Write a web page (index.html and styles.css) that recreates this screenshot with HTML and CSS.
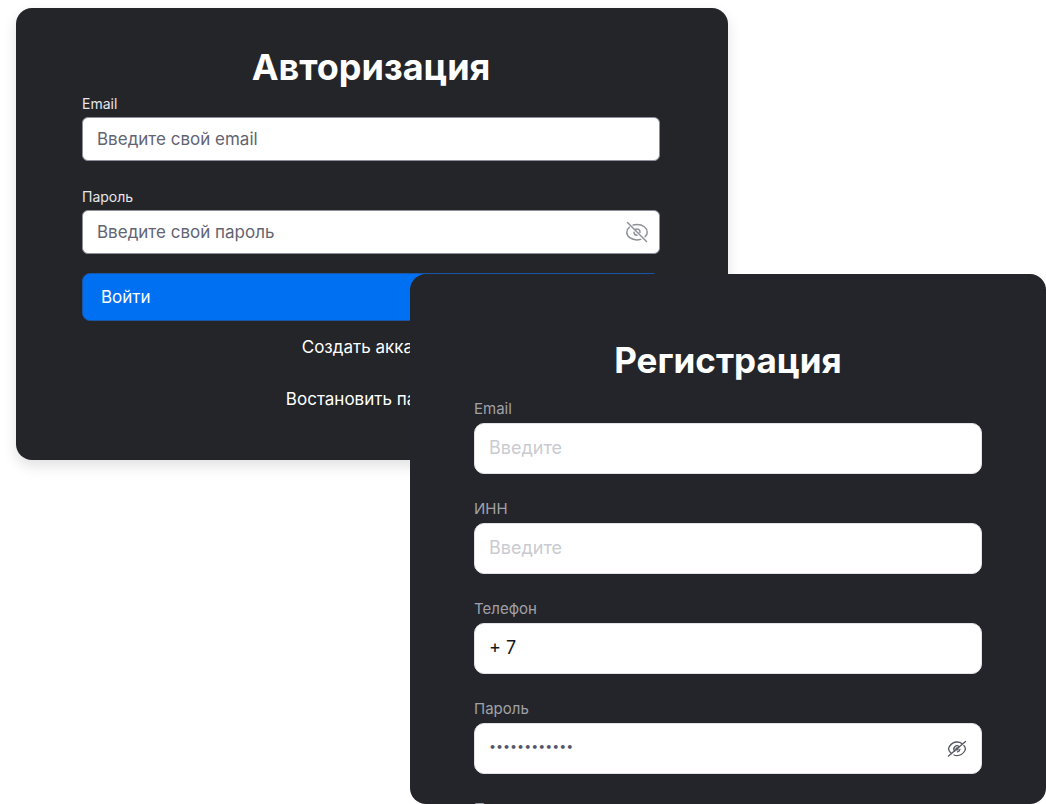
FILE: index.html
```html
<!DOCTYPE html>
<html lang="ru">
<head>
    <meta charset="UTF-8">
    <meta name="viewport" content="width=device-width, initial-scale=1.0">
    <title>Авторизация и регистрация</title>
    <link rel="stylesheet" href="styles.css">
</head>
<body>
    <main class="forms">
        <!-- Вход -->
        <form class="card login">
            <h1>Авторизация</h1>
            <div class="field">
                <label for="loginEmail">Email</label>
                <input type="email" id="loginEmail" placeholder="Введите свой email">
            </div>
            <div class="field">
                <label for="loginPassword">Пароль</label>
                <div class="password">
                    <input type="password" id="loginPassword" placeholder="Введите свой пароль">
                    <button type="button" class="toggle" aria-label="Показать пароль">
                        <svg width="24" height="24" viewBox="0 0 24 24" fill="none" stroke="currentColor" stroke-width="1.5" stroke-linecap="round">
                            <path d="M8.200 5C9.400 4.600 10.700 4.400 12 4.400c5.800 0 10.200 3.600 10.200 7.800 0 1.700-.8 3.300-2.100 4.600"/>
                            <path d="M4.300 7.300C2.700 8.700 1.800 10.400 1.800 12.200c0 4.200 4.400 7.700 10.200 7.700 1.300 0 2.600-.2 3.700-.5"/>
                            <path d="M10.200 9.500c2.300-1.500 5.200.3 4.800 3M9 12.300c0 1.600 1.300 2.900 3 2.900"/>
                            <path d="M2.500 2.500l19 19"/>
                        </svg>
                    </button>
                </div>
            </div>
            <button type="submit" class="submit">Войти</button>
            <a href="#register">Создать аккаунт</a>
            <a href="#restore">Востановить пароль</a>
        </form>

        <!-- Регистрация -->
        <form class="card register" id="register">
            <h1>Регистрация</h1>
            <div class="field">
                <label for="email">Email</label>
                <input type="email" id="email" placeholder="Введите">
            </div>
            <div class="field">
                <label for="inn">ИНН</label>
                <input type="text" id="inn" placeholder="Введите">
            </div>
            <div class="field">
                <label for="phone">Телефон</label>
                <input type="tel" id="phone" value="+ 7">
            </div>
            <div class="field">
                <label for="password">Пароль</label>
                <div class="password">
                    <input type="password" id="password" placeholder="••••••••••••">
                    <button type="button" class="toggle" aria-label="Показать пароль">
                        <svg width="20" height="20" viewBox="0 0 20 20" fill="none" stroke="currentColor" stroke-width="1.3" stroke-linecap="round">
                            <path d="M14.800 4.600C13.400 3.500 11.700 3 10 3 7 3 4.200 4.700 2.300 7.600c-.8 1.200-.8 3.200 0 4.400.6 1 1.400 1.900 2.300 2.600"/>
                            <path d="M7 16c1 .4 2 .6 3 .6 3 0 5.800-1.700 7.700-4.600.8-1.200.8-3.200 0-4.400l-.9-1.200"/>
                            <path d="M12.100 7.700a3 3 0 0 0-4.300 4.300M12.900 10.400a3 3 0 0 1-2.400 2.400"/>
                            <circle cx="10" cy="9.900" r="1"/>
                            <path d="M1.500 17L18.500 2.500"/>
                        </svg>
                    </button>
                </div>
            </div>
            <div class="field">
                <label for="passwordRepeat">Повторите пароль</label>
                <input type="password" id="passwordRepeat">
            </div>
        </form>
    </main>
</body>
</html>
```

FILE: styles.css
```css
* {
    box-sizing: border-box;
}
body {
    margin: 0;
    background: #fff;
    color: #fff;
    font-family: Inter, "Liberation Sans", sans-serif;
}
/* карточки перекрываются в средней ячейке сетки */
.forms {
    display: grid;
    grid-template-columns: 394fr 318fr 318fr;
    grid-template-rows: 266px 186px minmax(0, 1fr);
    height: 100vh;
    padding: 8px 0 0 16px;
}
.card {
    display: flex;
    flex-direction: column;
    background: #242529;
    border-radius: 16px;
}
.login {
    grid-area: 1 / 1 / 3 / 3;
    padding: 37px 68px 0 66px;
    box-shadow: 0 6px 14px rgba(0, 0, 0, 0.12);
}
.register {
    grid-area: 2 / 2 / 4 / 4;
    padding: 64px 64px 0;
    background: #24252a;
    overflow: hidden;
}
h1 {
    margin: 0;
    font-size: 36px;
    line-height: 44px;
    font-weight: 700;
    text-align: center;
}
.field {
    display: flex;
    flex-direction: column;
}
label {
    font-size: 14px;
    line-height: 18px;
    color: #e6e6ea;
}
input {
    width: 100%;
    height: 44px;
    padding: 0 14px;
    background: #fff;
    border: 1px solid #8e8f9c;
    border-radius: 6px;
    color: #17181c;
    font-family: inherit;
    font-size: 17px;
}
input::placeholder {
    color: #626472;
    opacity: 1;
}
.login .field {
    gap: 4px;
    margin-bottom: 27px;
}
.login h1 {
    margin-bottom: 6px;
}
.login .field + .field {
    margin-bottom: 19px;
}
.password {
    position: relative;
}
.toggle {
    position: absolute;
    top: 0;
    right: 11px;
    bottom: 0;
    display: flex;
    align-items: center;
    padding: 0;
    background: none;
    border: none;
    color: #8e909a;
    cursor: pointer;
}
.submit {
    height: 48px;
    padding: 0 18px;
    background: #0070f3;
    border: 1px solid #1a56a8;
    border-radius: 8px;
    color: #fff;
    font-family: inherit;
    font-size: 17px;
    text-align: left;
    cursor: pointer;
}
.login a {
    margin-top: 16px;
    font-size: 17px;
    line-height: 20px;
    color: #fff;
    text-align: center;
    text-decoration: none;
}
.login a + a {
    margin-top: 32px;
}
.register h1 {
    margin-bottom: 18px;
    font-size: 35px;
}
.register .field {
    gap: 5px;
    margin-bottom: 26px;
}
.register label {
    font-size: 15px;
    color: #a0a1a8;
}
.register input {
    height: 51px;
    padding-bottom: 2px;
    border-color: #e2e2e8;
    border-radius: 10px;
    font-size: 18px;
}
.register input::placeholder {
    color: #c9cbd1;
}
.register .password input {
    font-family: "DejaVu Sans", sans-serif;
    font-size: 11px;
    font-weight: 700;
}
.register .password input::placeholder {
    color: #54556a;
}
.register .toggle {
    right: 15px;
    color: #54565f;
}
```
